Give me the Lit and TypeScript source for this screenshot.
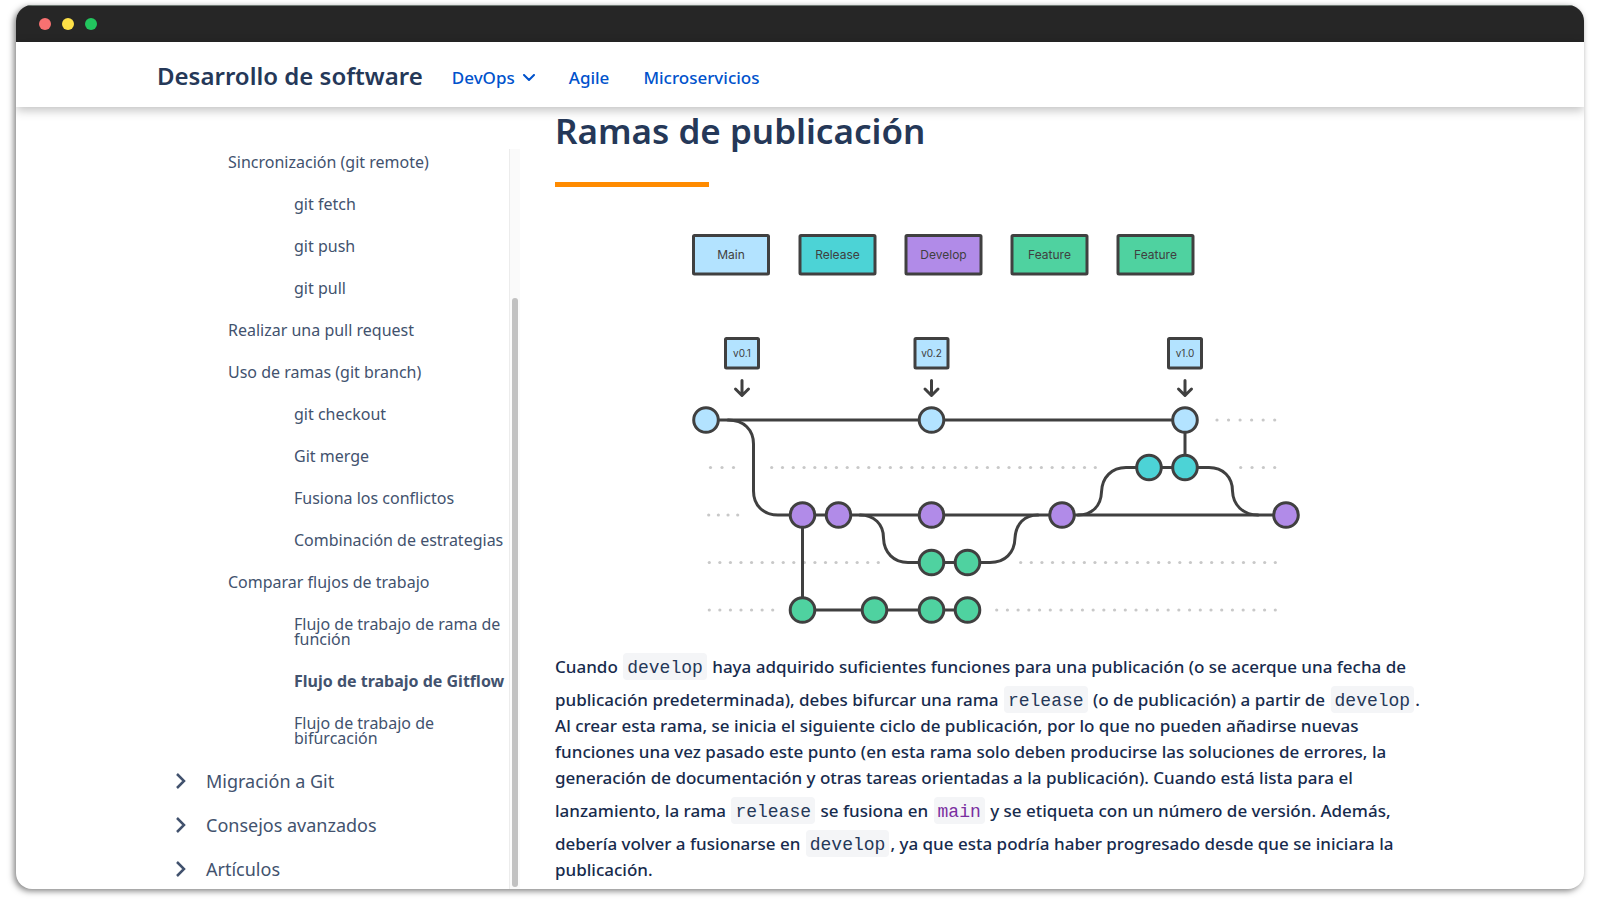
import { LitElement, html, svg, css } from "lit";
import { customElement } from "lit/decorators.js";
import { classMap } from "lit/directives/class-map.js";

const FONT = css`"Noto Sans", "Open Sans", sans-serif`;

@customElement("window-bar")
class WindowBar extends LitElement {
  static styles = css`
    :host {
      display: flex;
      align-items: center;
      gap: 11px;
      height: 36px;
      padding-left: 23px;
      background: #262626;
      border-top: 1px solid #6f7a74;
    }
    .dot {
      width: 12px;
      height: 12px;
      border-radius: 50%;
    }
    .close { background: #f87171; }
    .minimise { background: #fde047; }
    .expand { background: #22c55e; }
  `;
  render() {
    return html`
      <span class="dot close"></span>
      <span class="dot minimise"></span>
      <span class="dot expand"></span>
    `;
  }
}

@customElement("site-header")
class SiteHeader extends LitElement {
  static styles = css`
    :host {
      display: flex;
      align-items: center;
      gap: 29px;
      height: 65px;
      padding: 0 24px 0 141px;
      position: relative;
      z-index: 1;
      background: #fff;
      box-shadow: 0 3px 10px rgba(0, 0, 0, 0.26);
      font-family: ${FONT};
    }
    .brand {
      color: #253858;
      font-size: 24px;
      line-height: 32px;
      font-weight: 600;
      text-decoration: none;
      white-space: nowrap;
      padding-top: 2px;
    }
    nav {
      display: flex;
      align-items: center;
      gap: 34px;
      padding-top: 6px;
    }
    nav a,
    nav button {
      display: flex;
      align-items: center;
      gap: 8px;
      margin: 0;
      padding: 0;
      border: 0;
      background: none;
      color: #0052cc;
      font: 500 17px/24px ${FONT};
      text-decoration: none;
      cursor: pointer;
    }
    svg {
      width: 12px;
      height: 8px;
      fill: none;
      stroke: currentColor;
      stroke-width: 2;
      stroke-linecap: round;
      stroke-linejoin: round;
    }
  `;
  render() {
    return html`
      <a class="brand" href="#">Desarrollo de software</a>
      <nav>
        <button type="button" aria-haspopup="true">
          DevOps
          <svg viewBox="0 0 12 8" aria-hidden="true"><path d="M1 1l5 5 5-5" /></svg>
        </button>
        <a href="#agile">Agile</a>
        <a href="#microservicios">Microservicios</a>
      </nav>
    `;
  }
}

interface Entry {
  label: string;
  level: 1 | 2 | 3;
  current?: boolean;
}

const ENTRIES: Entry[] = [
  { label: "Sincronización (git remote)", level: 2 },
  { label: "git fetch", level: 3 },
  { label: "git push", level: 3 },
  { label: "git pull", level: 3 },
  { label: "Realizar una pull request", level: 2 },
  { label: "Uso de ramas (git branch)", level: 2 },
  { label: "git checkout", level: 3 },
  { label: "Git merge", level: 3 },
  { label: "Fusiona los conflictos", level: 3 },
  { label: "Combinación de estrategias", level: 3 },
  { label: "Comparar flujos de trabajo", level: 2 },
  { label: "Flujo de trabajo de rama de función", level: 3 },
  { label: "Flujo de trabajo de Gitflow", level: 3, current: true },
  { label: "Flujo de trabajo de bifurcación", level: 3 },
  { label: "Migración a Git", level: 1 },
  { label: "Consejos avanzados", level: 1 },
  { label: "Artículos", level: 1 },
];

@customElement("side-nav")
class SideNav extends LitElement {
  static styles = css`
    :host {
      display: flex;
      flex: 0 0 504px;
      min-height: 0;
      margin-top: 42px;
      font-family: ${FONT};
    }
    ul {
      flex: 1;
      min-width: 0;
      margin: 0;
      padding: 0;
      list-style: none;
      overflow: hidden;
    }
    .entry a {
      display: flex;
      align-items: center;
      padding: 13px 0 14px;
      color: #42526e;
      font-size: 16px;
      line-height: 15px;
      font-weight: 400;
      text-decoration: none;
    }
    .entry:first-child a { padding-top: 6px; }
    .level-2 a { padding-left: 212px; }
    .level-3 a { padding-left: 278px; }
    .level-1 a {
      gap: 20px;
      padding: 12px 0 14px 160px;
      font-size: 18px;
      line-height: 18px;
    }
    .current a {
      font-weight: 700;
    }
    ul svg {
      width: 10px;
      height: 16px;
      fill: none;
      stroke: currentColor;
      stroke-width: 2.5;
    }
    .track {
      box-sizing: border-box;
      width: 11px;
      padding: 149px 2px 2px 2px;
      border-left: 1px solid #ececec;
      background: #fafafa;
    }
    .thumb {
      height: 100%;
      border-radius: 3px;
      background: #c1c1c1;
    }
  `;
  render() {
    return html`
      <ul>
        ${ENTRIES.map(
          (e) => html`
            <li class=${classMap({ entry: true, [`level-${e.level}`]: true, current: !!e.current })}>
              <a href="#">
                ${e.level === 1
                  ? html`<svg viewBox="0 0 10 16" aria-hidden="true"><path d="M1 1l7 7-7 7" /></svg>`
                  : null}
                <span>${e.label}</span>
              </a>
            </li>
          `
        )}
      </ul>
      <div class="track"><div class="thumb"></div></div>
    `;
  }
}

const BLUE = "#b3e3ff";
const TEAL = "#4cd3d6";
const PURPLE = "#b18be8";
const GREEN = "#4fd2a0";

const LEGEND: [string, number, string][] = [
  ["Main", 731, BLUE],
  ["Release", 837.5, TEAL],
  ["Develop", 943.5, PURPLE],
  ["Feature", 1049.5, GREEN],
  ["Feature", 1155.5, GREEN],
];

const TAGS: [string, number][] = [
  ["v0.1", 742],
  ["v0.2", 931.5],
  ["v1.0", 1185],
];

const COMMITS: [number, number, string][] = [
  [706, 420, BLUE],
  [931.5, 420, BLUE],
  [1185, 420, BLUE],
  [1149, 467.5, TEAL],
  [1185, 467.5, TEAL],
  [802.5, 515, PURPLE],
  [838.5, 515, PURPLE],
  [931.5, 515, PURPLE],
  [1062, 515, PURPLE],
  [1286, 515, PURPLE],
  [931.5, 562.5, GREEN],
  [967.5, 562.5, GREEN],
  [802.5, 610, GREEN],
  [874.5, 610, GREEN],
  [931.5, 610, GREEN],
  [967.5, 610, GREEN],
];

/* y, first x, last x, number of dots */
const DOTS: [number, number, number, number][] = [
  [420, 1217, 1274.7, 6],
  [467.5, 710.5, 733.5, 3],
  [467.5, 771.7, 1095.3, 31],
  [467.5, 1240.7, 1274.7, 4],
  [515, 708.7, 737.7, 4],
  [562.5, 709.3, 878.3, 17],
  [562.5, 1020.7, 1275.3, 25],
  [610, 709.3, 772.7, 7],
  [610, 996.7, 1275.3, 27],
];

const LINES = [
  "M706 420H1185",
  "M728 420C744 420 753.5 430 753.5 444V491C753.5 505 763 515 778 515H802",
  "M802 515H1286",
  "M802.5 515V610H967",
  "M860 515C874 515 883.5 524 883.5 538C884 553 894 562.5 908 562.5H990C1005 562.5 1014.5 553 1015 538C1016 524 1024 515 1038 515",
  "M1078 515C1092 515 1101 506 1101.5 492C1102 477 1112 467.5 1126 467.5H1209C1223 467.5 1232.5 477 1232.5 491C1233 505 1243 515 1258 515",
  "M1185 420V467",
];

@customElement("branch-diagram")
class BranchDiagram extends LitElement {
  static styles = css`
    :host { display: block; }
    svg {
      display: block;
      width: 100%;
      height: auto;
    }
    .line {
      fill: none;
      stroke: #404040;
      stroke-width: 3;
      stroke-linecap: round;
      stroke-linejoin: round;
    }
    .shape {
      stroke: #404040;
      stroke-width: 3;
    }
    .guide { fill: #c8c8c8; }
    .legend {
      fill: #404040;
      font: 400 12px Inter, sans-serif;
      text-anchor: middle;
    }
    .tag {
      fill: #404040;
      font: 400 10px Inter, sans-serif;
      text-anchor: middle;
    }
  `;
  render() {
    return html`
      <svg viewBox="555 225 876 422" role="img" aria-label="Ramas de publicación">
        ${DOTS.map(([y, from, to, n]) =>
          Array.from(
            { length: n },
            (_, i) => svg`<circle class="guide" cx=${from + ((to - from) * i) / (n - 1)} cy=${y} r="1.6" />`
          )
        )}
        ${LINES.map((d) => svg`<path class="line" d=${d} />`)}
        ${COMMITS.map(([x, y, fill]) => svg`<circle class="shape" cx=${x} cy=${y} r="12.3" fill=${fill} />`)}
        ${LEGEND.map(
          ([label, x, fill]) => svg`
            <rect class="shape" x=${x - 37.5} y="235.5" width="75" height="38.5" rx="1" fill=${fill} />
            <text class="legend" x=${x} y="259">${label}</text>`
        )}
        ${TAGS.map(
          ([label, x]) => svg`
            <rect class="shape" x=${x - 16.5} y="338.5" width="33" height="29.5" rx="1" fill=${BLUE} />
            <text class="tag" x=${x} y="357">${label}</text>
            <path class="line" d=${`M${x} 380.5V395M${x - 6.5} 389l6.5 6.5 6.5-6.5`} />`
        )}
      </svg>
    `;
  }
}

@customElement("article-body")
class ArticleBody extends LitElement {
  static styles = css`
    :host {
      display: block;
      flex: 0 1 876px;
      min-width: 0;
      margin-left: 35px;
      color: #172b4d;
      font-family: ${FONT};
    }
    h2 {
      margin: 0;
      color: #253858;
      font-size: 35px;
      line-height: 48px;
      font-weight: 600;
    }
    .rule {
      width: 154px;
      height: 5px;
      margin: 27px 0 38px;
      background: #ff8b00;
    }
    p {
      margin: 0;
      font-size: 17px;
      line-height: 26px;
      font-weight: 500;
    }
    code {
      display: inline-block;
      margin: 6px 1px 0;
      padding: 3px 4px 0;
      border-radius: 4px;
      background: #f4f5f7;
      color: #253858;
      font: 400 18px/24px "Liberation Mono", monospace;
    }
    .keyword { color: #7a2fa0; }
  `;
  render() {
    return html`
      <h2>Ramas de publicación</h2>
      <div class="rule"></div>
      <branch-diagram></branch-diagram>
      <p>
        Cuando <code>develop</code> haya adquirido suficientes funciones para una publicación (o se acerque una fecha de
        publicación predeterminada), debes bifurcar una rama <code>release</code> (o de publicación) a partir de
        <code>develop</code>. Al crear esta rama, se inicia el siguiente ciclo de publicación, por lo que no pueden
        añadirse nuevas funciones una vez pasado este punto (en esta rama solo deben producirse las soluciones de
        errores, la generación de documentación y otras tareas orientadas a la publicación). Cuando está lista para el
        lanzamiento, la rama <code>release</code> se fusiona en <code class="keyword">main</code> y se etiqueta con un
        número de versión. Además, debería volver a fusionarse en <code>develop</code>, ya que esta podría haber
        progresado desde que se iniciara la publicación.
      </p>
    `;
  }
}

@customElement("app-root")
class AppRoot extends LitElement {
  static styles = css`
    :host {
      display: flex;
      box-sizing: border-box;
      height: 100vh;
      padding: 5px 16px 11px;
      background: #fff;
    }
    .window {
      display: flex;
      flex-direction: column;
      flex: 1;
      min-width: 0;
      overflow: hidden;
      border-radius: 16px;
      background: #fff;
      box-shadow: -2px 2px 6px rgba(0, 0, 0, 0.5);
    }
    .page {
      display: flex;
      flex: 1;
      min-height: 0;
      overflow: hidden;
    }
  `;
  render() {
    return html`
      <div class="window">
        <window-bar></window-bar>
        <site-header></site-header>
        <div class="page">
          <side-nav></side-nav>
          <article-body></article-body>
        </div>
      </div>
    `;
  }
}
